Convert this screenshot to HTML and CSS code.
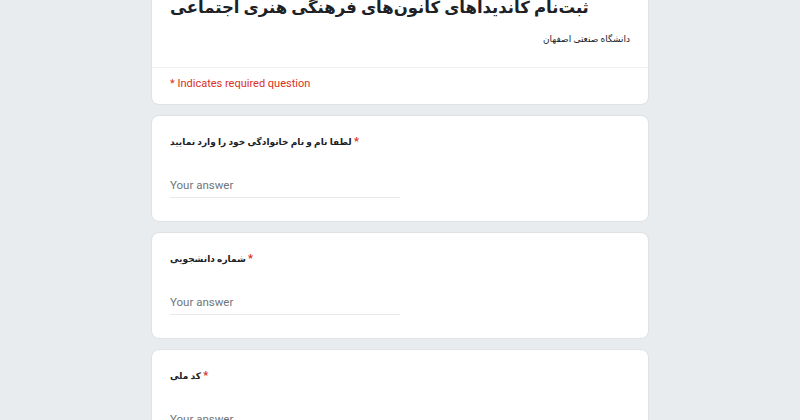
FILE: index.html
```html
<!DOCTYPE html>
<html lang="fa">
<head>
<meta charset="UTF-8" />
<meta name="viewport" content="width=device-width, initial-scale=1.0" />
<title>ثبت‌نام کاندیداهای کانون‌های فرهنگی هنری اجتماعی</title>
<link rel="stylesheet" href="styles.css">
</head>
<body>
<form class="form">
    <div class="card header">
        <div class="header-top">
            <h1 class="title">ثبت‌نام کاندیداهای کانون‌های فرهنگی هنری اجتماعی</h1>
            <div class="desc">دانشگاه صنعتی اصفهان</div>
        </div>
        <div class="required-note">* Indicates required question</div>
    </div>

    <div class="card question">
        <div class="q-title">لطفا نام و نام خانوادگی خود را وارد نمایید <span class="star">*</span></div>
        <input class="answer" type="text" placeholder="Your answer" />
    </div>

    <div class="card question">
        <div class="q-title">شماره دانشجویی <span class="star">*</span></div>
        <input class="answer" type="text" placeholder="Your answer" />
    </div>

    <div class="card question">
        <div class="q-title">کد ملی <span class="star">*</span></div>
        <input class="answer" type="text" placeholder="Your answer" />
    </div>
</form>
</body>
</html>
```

FILE: styles.css
```css
body {
    margin: 0;
    background-color: #e8ecef;
    font-family: Roboto, "DejaVu Sans", sans-serif;
    color: #202124;
}

.form {
    width: 498px;
    margin: 0 auto;
    display: flex;
    flex-direction: column;
    gap: 10px;
}

.card {
    background-color: #fff;
    border: 1px solid #dfe2e5;
    border-radius: 8px;
}

/* page is scrolled a little, title card top is above the window */
.header {
    margin-top: -24px;
    border-top-left-radius: 0;
    border-top-right-radius: 0;
}

.header-top {
    padding: 16px 18px 20px;
    border-bottom: 1px solid #eef0f2;
}

.title {
    margin: 0;
    font-size: 16.5px;
    line-height: 29px;
    font-weight: bold;
    white-space: nowrap;
    color: #202124;
}

.desc {
    margin-top: 9px;
    font-size: 9px;
    line-height: 16px;
    text-align: right;
}

.required-note {
    padding: 8px 18px 12px;
    font-size: 11px;
    line-height: 16px;
    color: #d93025;
}

.question {
    padding: 17px 18px 23px;
}

.q-title {
    font-size: 9px;
    line-height: 18px;
    font-weight: bold;
}

.star {
    color: #d93025;
    font-family: Roboto, sans-serif;
    font-size: 11px;
}

.answer {
    display: block;
    width: 50%;
    margin-top: 21px;
    padding: 0;
    height: 25px;
    border: none;
    border-bottom: 1px solid #e6e8ea;
    font-family: Roboto, sans-serif;
    font-size: 11.5px;
    color: #202124;
    outline: none;
}

.answer::placeholder {
    color: #70757a;
}
```
